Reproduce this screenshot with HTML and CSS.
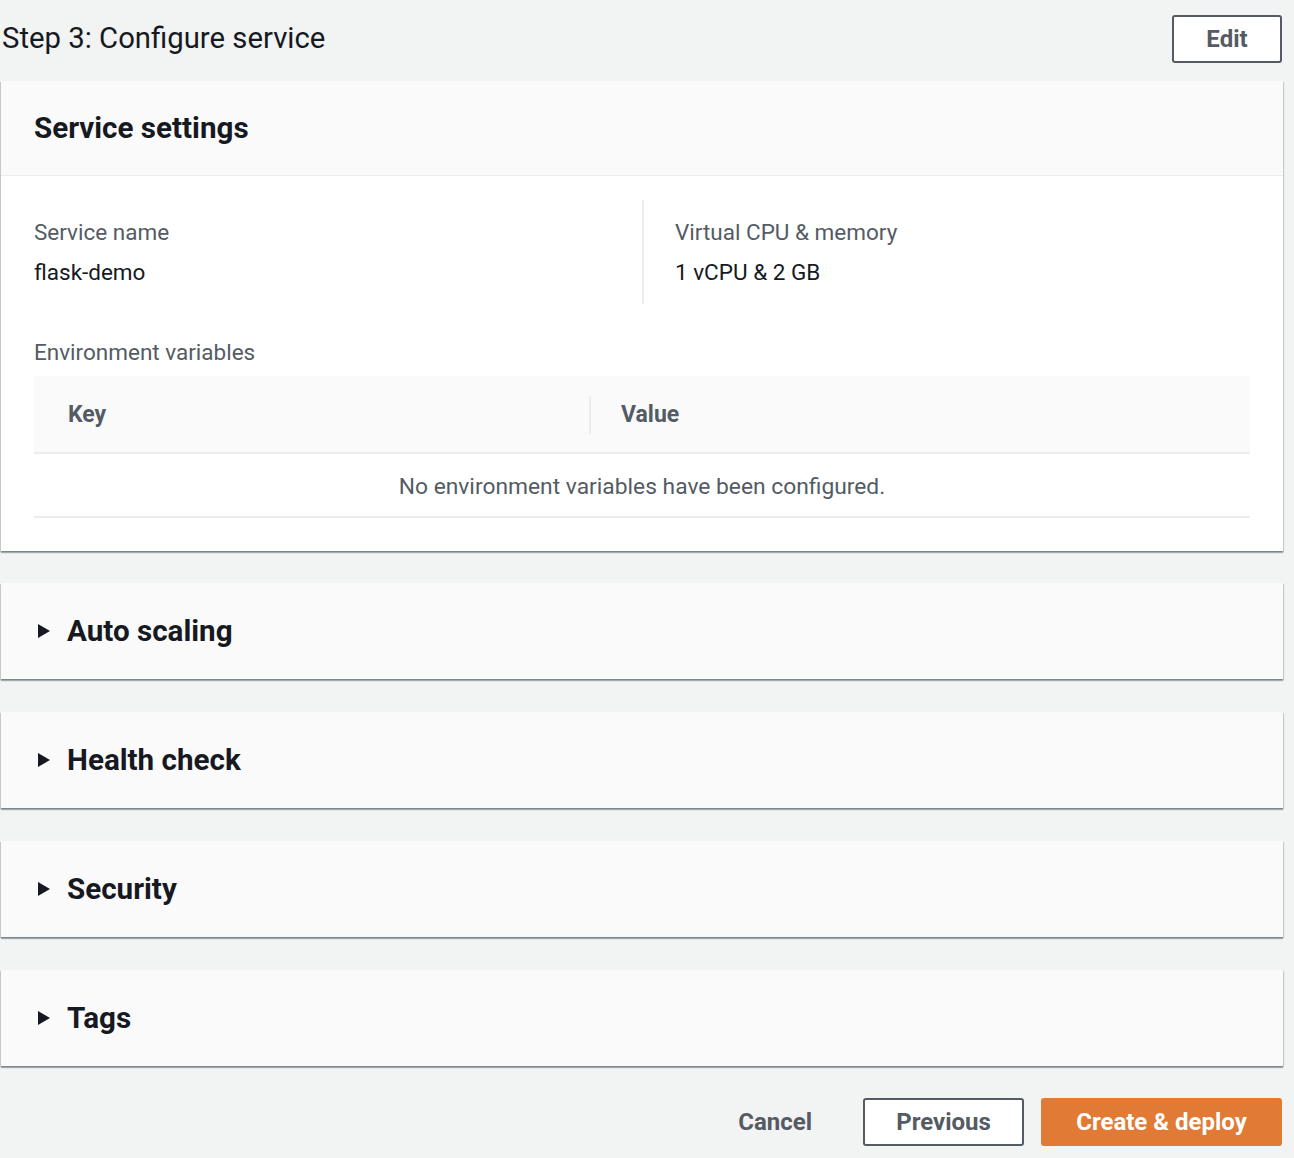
FILE: index.html
```html
<!DOCTYPE html>
<html>
<head>
<meta charset="utf-8">
<link rel="stylesheet" href="styles.css">
</head>
<body>
<div class="page">
  <div class="page-header">
    <h1 class="title">Step 3: Configure service</h1>
    <button class="btn btn-normal btn-edit">Edit</button>
  </div>

  <section class="container">
    <div class="container-header">
      <h2 class="container-title">Service settings</h2>
    </div>
    <div class="container-body">
      <div class="columns">
        <div class="column">
          <div class="label">Service name</div>
          <div class="value">flask-demo</div>
        </div>
        <div class="column column-right">
          <div class="label">Virtual CPU &amp; memory</div>
          <div class="value">1 vCPU &amp; 2 GB</div>
        </div>
      </div>
      <div class="label env-label">Environment variables</div>
      <div class="table">
        <div class="table-head">
          <div class="th th-key">Key</div>
          <div class="th th-value">Value</div>
        </div>
        <div class="table-empty">No environment variables have been configured.</div>
      </div>
    </div>
  </section>

  <section class="container expandable">
    <div class="expand-header"><span class="caret"></span><h2 class="container-title">Auto scaling</h2></div>
  </section>
  <section class="container expandable">
    <div class="expand-header"><span class="caret"></span><h2 class="container-title">Health check</h2></div>
  </section>
  <section class="container expandable">
    <div class="expand-header"><span class="caret"></span><h2 class="container-title">Security</h2></div>
  </section>
  <section class="container expandable">
    <div class="expand-header"><span class="caret"></span><h2 class="container-title">Tags</h2></div>
  </section>

  <div class="footer">
    <button class="btn btn-link">Cancel</button>
    <button class="btn btn-normal btn-prev">Previous</button>
    <button class="btn btn-primary">Create &amp; deploy</button>
  </div>
</div>
</body>
</html>
```

FILE: styles.css
```css
html, body {
  margin: 0;
  padding: 0;
  background: #f2f3f3;
}
body {
  font-family: Roboto, "Noto Sans", sans-serif;
  color: #16191f;
  width: 1294px;
  height: 1158px;
  overflow: hidden;
}
.page {
  width: 1282px;
  margin-left: 1px;
  display: flex;
  flex-direction: column;
}
.page-header {
  display: flex;
  align-items: center;
  justify-content: space-between;
  height: 81px;
  padding-right: 1px;
  box-sizing: border-box;
}
.title {
  margin: 0;
  font-size: 29.3px;
  font-weight: 400;
  line-height: 38px;
  padding-left: 1px;
  margin-top: -5px;
}
.btn {
  font-family: inherit;
  font-weight: 700;
  font-size: 24px;
  border-radius: 3px;
  height: 48px;
  box-sizing: border-box;
  cursor: pointer;
  padding: 0 32px;
}
.btn-normal {
  background: #fff;
  color: #545b64;
  border: 2px solid #545b64;
}
.btn-edit {
  width: 110px;
  margin-top: -4px;
  padding: 0;
}
.container {
  background: #fff;
  box-shadow: 0 2px 1px 0 rgba(0, 28, 36, 0.3), 1px 1px 1px 0 rgba(0, 28, 36, 0.15), -1px 1px 1px 0 rgba(0, 28, 36, 0.15);
}
.container-header {
  background: #fafafa;
  height: 95px;
  border-bottom: 1px solid #eaeded;
  box-sizing: border-box;
  display: flex;
  align-items: center;
  padding-left: 33px;
}
.container-title {
  margin: 0;
  font-size: 29.6px;
  font-weight: 700;
  line-height: 38px;
}
.container-body {
  padding: 24px 33px 33px 33px;
}
.columns {
  display: grid;
  grid-template-columns: 1fr 1fr;
}
.column {
  padding: 16px 0 16px 0;
}
.column-right {
  border-left: 2px solid #eaeded;
  padding-left: 31px;
}
.label {
  font-size: 22.5px;
  color: #545b64;
  line-height: 32px;
}
.value {
  font-size: 22.5px;
  color: #16191f;
  line-height: 32px;
  margin-top: 8px;
}
.env-label {
  margin-top: 32px;
  margin-bottom: 8px;
}
.table-head {
  display: flex;
  background: #fafafa;
  height: 78px;
  border-bottom: 2px solid #eaeded;
  box-sizing: border-box;
  align-items: center;
  padding-top: 2px;
}
.th {
  font-size: 23px;
  font-weight: 700;
  color: #545b64;
  line-height: 38px;
}
.th-key {
  box-sizing: border-box;
  width: 557px;
  padding-left: 34px;
  border-right: 2px solid #eaeded;
}
.th-value {
  padding-left: 30px;
}
.table-empty {
  text-align: center;
  font-size: 22.8px;
  color: #545b64;
  height: 64px;
  line-height: 66px;
  border-bottom: 2px solid #eaeded;
  box-sizing: border-box;
}
.expandable {
  margin-top: 32px;
  background: #fafafa;
}
.expandable + .expandable {
  margin-top: 33px;
}
.expand-header {
  height: 96px;
  display: flex;
  align-items: center;
  padding-left: 37px;
}
.caret {
  width: 0;
  height: 0;
  border-top: 7.5px solid transparent;
  border-bottom: 7.5px solid transparent;
  border-left: 12px solid #16191f;
  margin-right: 17px;
}
.footer {
  display: flex;
  justify-content: flex-end;
  align-items: center;
  margin-top: 32px;
  gap: 17px;
  padding-right: 1px;
}
.btn-link {
  background: transparent;
  border: none;
  color: #545b64;
  padding: 0 34px;
}
.btn-prev {
  width: 161px;
  padding: 0;
}
.btn-primary {
  background: #e07a35;
  border: none;
  color: #fff;
  width: 241px;
  padding: 0;
}
```
